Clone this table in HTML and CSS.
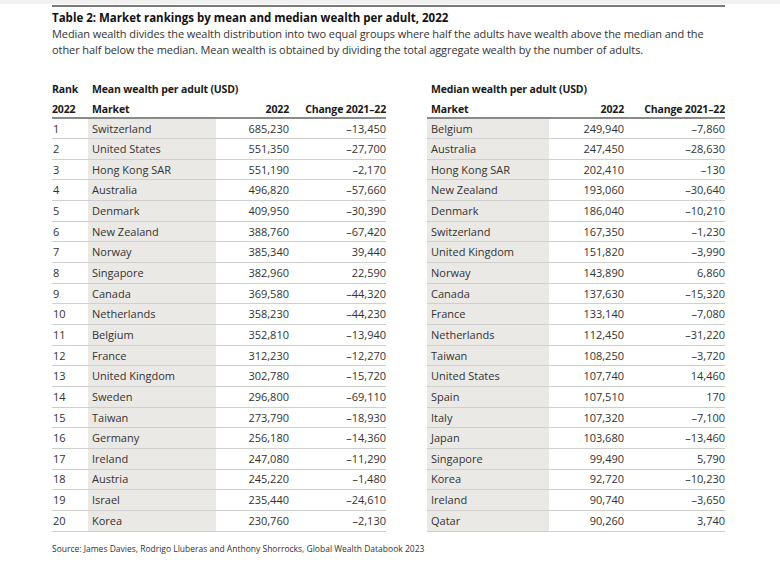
FILE: index.html
```html
<!DOCTYPE html>
<html>
<head>
<meta charset="utf-8">
<link rel="stylesheet" href="styles.css">
</head>
<body>
<div class="topband"></div>
<div class="page">
  <div class="rule"></div>
  <h1 class="title">Table 2: Market rankings by mean and median wealth per adult, 2022</h1>
  <p class="desc">Median wealth divides the wealth distribution into two equal groups where half the adults have wealth above the median and the other half below the median. Mean wealth is obtained by dividing the total aggregate wealth by the number of adults.</p>
  <div class="tables">
    <table class="tbl left">
      <colgroup><col class="c-rank"><col class="c-mkt"><col class="c-val"><col class="c-chg"></colgroup>
      <thead>
        <tr class="h1"><th class="l">Rank</th><th class="l mk" colspan="3">Mean wealth per adult (USD)</th></tr>
        <tr class="h2"><th class="l">2022</th><th class="l mk">Market</th><th class="r">2022</th><th class="r">Change 2021–22</th></tr>
      </thead>
      <tbody>
        <tr><td>1</td><td class="mk">Switzerland</td><td class="r">685,230</td><td class="r">–13,450</td></tr>
        <tr><td>2</td><td class="mk">United States</td><td class="r">551,350</td><td class="r">–27,700</td></tr>
        <tr><td>3</td><td class="mk">Hong Kong SAR</td><td class="r">551,190</td><td class="r">–2,170</td></tr>
        <tr><td>4</td><td class="mk">Australia</td><td class="r">496,820</td><td class="r">–57,660</td></tr>
        <tr><td>5</td><td class="mk">Denmark</td><td class="r">409,950</td><td class="r">–30,390</td></tr>
        <tr><td>6</td><td class="mk">New Zealand</td><td class="r">388,760</td><td class="r">–67,420</td></tr>
        <tr><td>7</td><td class="mk">Norway</td><td class="r">385,340</td><td class="r">39,440</td></tr>
        <tr><td>8</td><td class="mk">Singapore</td><td class="r">382,960</td><td class="r">22,590</td></tr>
        <tr><td>9</td><td class="mk">Canada</td><td class="r">369,580</td><td class="r">–44,320</td></tr>
        <tr><td>10</td><td class="mk">Netherlands</td><td class="r">358,230</td><td class="r">–44,230</td></tr>
        <tr><td>11</td><td class="mk">Belgium</td><td class="r">352,810</td><td class="r">–13,940</td></tr>
        <tr><td>12</td><td class="mk">France</td><td class="r">312,230</td><td class="r">–12,270</td></tr>
        <tr><td>13</td><td class="mk">United Kingdom</td><td class="r">302,780</td><td class="r">–15,720</td></tr>
        <tr><td>14</td><td class="mk">Sweden</td><td class="r">296,800</td><td class="r">–69,110</td></tr>
        <tr><td>15</td><td class="mk">Taiwan</td><td class="r">273,790</td><td class="r">–18,930</td></tr>
        <tr><td>16</td><td class="mk">Germany</td><td class="r">256,180</td><td class="r">–14,360</td></tr>
        <tr><td>17</td><td class="mk">Ireland</td><td class="r">247,080</td><td class="r">–11,290</td></tr>
        <tr><td>18</td><td class="mk">Austria</td><td class="r">245,220</td><td class="r">–1,480</td></tr>
        <tr><td>19</td><td class="mk">Israel</td><td class="r">235,440</td><td class="r">–24,610</td></tr>
        <tr><td>20</td><td class="mk">Korea</td><td class="r">230,760</td><td class="r">–2,130</td></tr>
      </tbody>
    </table>
    <table class="tbl right">
      <colgroup><col class="c-mkt2"><col class="c-val2"><col class="c-chg2"></colgroup>
      <thead>
        <tr class="h1"><th class="l mk" colspan="3">Median wealth per adult (USD)</th></tr>
        <tr class="h2"><th class="l mk">Market</th><th class="r">2022</th><th class="r">Change 2021–22</th></tr>
      </thead>
      <tbody>
        <tr><td class="mk">Belgium</td><td class="r">249,940</td><td class="r">–7,860</td></tr>
        <tr><td class="mk">Australia</td><td class="r">247,450</td><td class="r">–28,630</td></tr>
        <tr><td class="mk">Hong Kong SAR</td><td class="r">202,410</td><td class="r">–130</td></tr>
        <tr><td class="mk">New Zealand</td><td class="r">193,060</td><td class="r">–30,640</td></tr>
        <tr><td class="mk">Denmark</td><td class="r">186,040</td><td class="r">–10,210</td></tr>
        <tr><td class="mk">Switzerland</td><td class="r">167,350</td><td class="r">–1,230</td></tr>
        <tr><td class="mk">United Kingdom</td><td class="r">151,820</td><td class="r">–3,990</td></tr>
        <tr><td class="mk">Norway</td><td class="r">143,890</td><td class="r">6,860</td></tr>
        <tr><td class="mk">Canada</td><td class="r">137,630</td><td class="r">–15,320</td></tr>
        <tr><td class="mk">France</td><td class="r">133,140</td><td class="r">–7,080</td></tr>
        <tr><td class="mk">Netherlands</td><td class="r">112,450</td><td class="r">–31,220</td></tr>
        <tr><td class="mk">Taiwan</td><td class="r">108,250</td><td class="r">–3,720</td></tr>
        <tr><td class="mk">United States</td><td class="r">107,740</td><td class="r">14,460</td></tr>
        <tr><td class="mk">Spain</td><td class="r">107,510</td><td class="r">170</td></tr>
        <tr><td class="mk">Italy</td><td class="r">107,320</td><td class="r">–7,100</td></tr>
        <tr><td class="mk">Japan</td><td class="r">103,680</td><td class="r">–13,460</td></tr>
        <tr><td class="mk">Singapore</td><td class="r">99,490</td><td class="r">5,790</td></tr>
        <tr><td class="mk">Korea</td><td class="r">92,720</td><td class="r">–10,230</td></tr>
        <tr><td class="mk">Ireland</td><td class="r">90,740</td><td class="r">–3,650</td></tr>
        <tr><td class="mk">Qatar</td><td class="r">90,260</td><td class="r">3,740</td></tr>
      </tbody>
    </table>
  </div>
  <p class="source">Source: James Davies, Rodrigo Lluberas and Anthony Shorrocks, Global Wealth Databook 2023</p>
</div>
</body>
</html>
```
FILE: styles.css
```css
html, body {
  margin: 0;
  padding: 0;
  background: #ffffff;
}
body {
  font-family: "Open Sans", "Noto Sans", sans-serif;
  color: #333333;
  width: 780px;
  height: 566px;
  overflow: hidden;
}
.topband {
  height: 4px;
  background: #f1f1f1;
}
.page {
  padding-left: 52px;
}
.rule {
  width: 673px;
  height: 2px;
  background: #7a7a7a;
  margin-top: 1px;
}
.title {
  margin: 3px 0 0 0;
  font-size: 11.5px;
  line-height: 16px;
  font-weight: 700;
  color: #111111;
}
.desc {
  margin: 0;
  width: 656px;
  font-size: 11px;
  letter-spacing: -0.08px;
  line-height: 16px;
  color: #333333;
}
.tables {
  display: flex;
  align-items: flex-start;
  gap: 41px;
  margin-top: 21px;
}
.tbl {
  border-collapse: collapse;
  table-layout: fixed;
  font-size: 11px;
  color: #333333;
}
.tbl.left { width: 334px; }
.tbl.right { width: 298px; }
.c-rank { width: 36px; }
.c-mkt { width: 128px; }
.c-val { width: 73px; }
.c-chg { width: 97px; }
.c-mkt2 { width: 122px; }
.c-val2 { width: 75px; }
.c-chg2 { width: 101px; }
.tbl th {
  font-weight: 700;
  font-size: 10.5px;
  letter-spacing: -0.15px;
  color: #1a1a1a;
  height: 20px;
  padding: 0;
  white-space: nowrap;
  line-height: 14px;
}
.tbl .h2 th {
  height: 19px;
  border-bottom: 2px solid #8a8a8a;
  vertical-align: top;
  padding-top: 3px;
  box-sizing: border-box;
}
.tbl .h1 th {
  vertical-align: top;
  padding-top: 3px;
  box-sizing: border-box;
}
.tbl td {
  height: 20.67px;
  padding: 0;
  border-bottom: 1px solid #cfcfcf;
  white-space: nowrap;
  box-sizing: border-box;
  line-height: 14px;
}
.tbl td:first-child { padding-left: 1px; }
.tbl td.mk {
  background: #ebe9e6;
  padding-left: 4px;
}
.tbl th.mk { padding-left: 4px; }
.tbl .l { text-align: left; }
.tbl .r { text-align: right; }
.source {
  margin: 11px 0 0 0;
  font-size: 8.5px;
  line-height: 12px;
  color: #333333;
}
```
